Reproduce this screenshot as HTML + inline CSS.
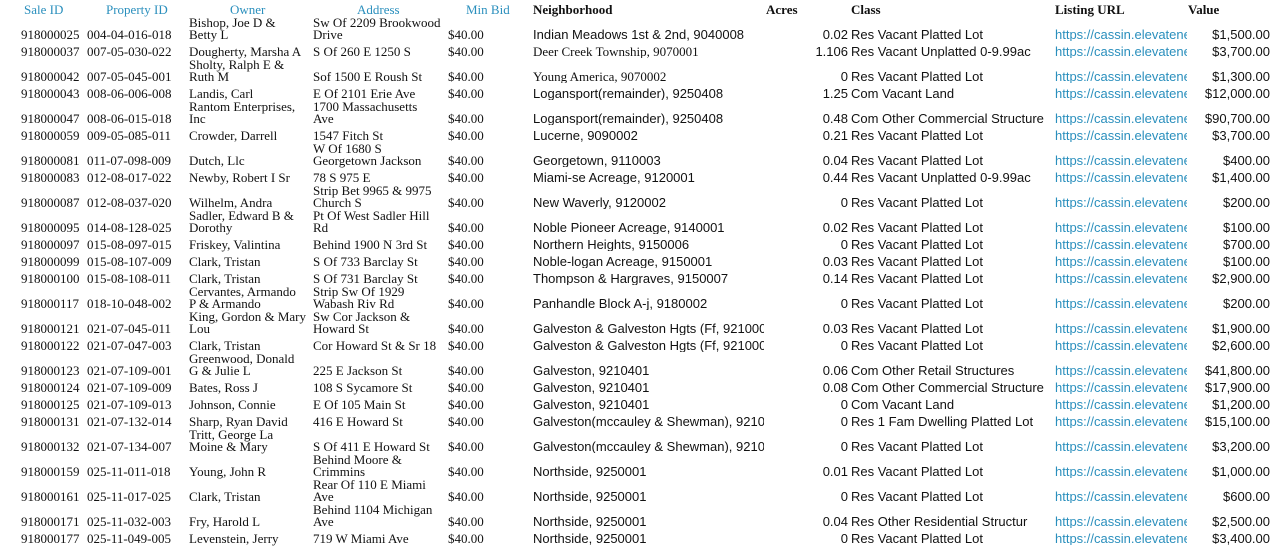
<!DOCTYPE html>
<html><head><meta charset="utf-8"><style>
body{margin:0;background:#fff;width:1277px;height:558px;overflow:hidden;position:relative;color:#111}
.h{position:absolute;top:3px;font-size:13px;line-height:14px}
.hs{font-family:"Liberation Serif",serif;color:#2a8fbd}
.hb{font-family:"Liberation Serif",serif;font-weight:bold;color:#111}
.r{position:absolute;left:0;width:1277px;height:14px}
.r>span{position:absolute;bottom:0px;line-height:12px;font-size:13px;white-space:nowrap}
.s{font-family:"Liberation Serif",serif}
.a{font-family:"Liberation Sans",sans-serif}
.c1{left:21px}.c2{left:87px}.c3{left:189px}.c4{left:313px}.c5{left:448px}
.c6{left:533px;width:231px;overflow:hidden}
.c7{right:429px;text-align:right}
.c8{left:851px}
.c9{left:1055px;width:132px;overflow:hidden;color:#2a8fbd}
.c10{right:7px;text-align:right}
</style></head><body>
<div class="h hs" style="left:24px">Sale ID</div>
<div class="h hs" style="left:106px">Property ID</div>
<div class="h hs" style="left:230px">Owner</div>
<div class="h hs" style="left:357px">Address</div>
<div class="h hs" style="left:466px">Min Bid</div>
<div class="h hb" style="left:533px">Neighborhood</div>
<div class="h hb" style="left:766px">Acres</div>
<div class="h hb" style="left:851px">Class</div>
<div class="h hb" style="left:1055px">Listing URL</div>
<div class="h hb" style="left:1188px">Value</div>

<div class="r" style="top:27px"><span class="s c1">918000025</span><span class="s c2">004-04-016-018</span><span class="s c3">Bishop, Joe D &amp;<br>Betty L</span><span class="s c4">Sw Of 2209 Brookwood<br>Drive</span><span class="s c5">$40.00</span><span class="a c6">Indian Meadows 1st &amp; 2nd, 9040008</span><span class="a c7">0.02</span><span class="a c8">Res Vacant Platted Lot</span><span class="a c9">https://cassin.elevatenetwork</span><span class="a c10">$1,500.00</span></div>
<div class="r" style="top:44px"><span class="s c1">918000037</span><span class="s c2">007-05-030-022</span><span class="s c3">Dougherty, Marsha A</span><span class="s c4">S Of 260 E 1250 S</span><span class="s c5">$40.00</span><span class="s c6">Deer Creek Township, 9070001</span><span class="a c7">1.106</span><span class="a c8">Res Vacant Unplatted 0-9.99ac</span><span class="a c9">https://cassin.elevatenetwork</span><span class="a c10">$3,700.00</span></div>
<div class="r" style="top:69px"><span class="s c1">918000042</span><span class="s c2">007-05-045-001</span><span class="s c3">Sholty, Ralph E &amp;<br>Ruth M</span><span class="s c4">Sof 1500 E Roush St</span><span class="s c5">$40.00</span><span class="s c6">Young America, 9070002</span><span class="a c7">0</span><span class="a c8">Res Vacant Platted Lot</span><span class="a c9">https://cassin.elevatenetwork</span><span class="a c10">$1,300.00</span></div>
<div class="r" style="top:86px"><span class="s c1">918000043</span><span class="s c2">008-06-006-008</span><span class="s c3">Landis, Carl</span><span class="s c4">E Of 2101 Erie Ave</span><span class="s c5">$40.00</span><span class="a c6">Logansport(remainder), 9250408</span><span class="a c7">1.25</span><span class="a c8">Com Vacant Land</span><span class="a c9">https://cassin.elevatenetwork</span><span class="a c10">$12,000.00</span></div>
<div class="r" style="top:111px"><span class="s c1">918000047</span><span class="s c2">008-06-015-018</span><span class="s c3">Rantom Enterprises,<br>Inc</span><span class="s c4">1700 Massachusetts<br>Ave</span><span class="s c5">$40.00</span><span class="a c6">Logansport(remainder), 9250408</span><span class="a c7">0.48</span><span class="a c8">Com Other Commercial Structure</span><span class="a c9">https://cassin.elevatenetwork</span><span class="a c10">$90,700.00</span></div>
<div class="r" style="top:128px"><span class="s c1">918000059</span><span class="s c2">009-05-085-011</span><span class="s c3">Crowder, Darrell</span><span class="s c4">1547 Fitch St</span><span class="s c5">$40.00</span><span class="a c6">Lucerne, 9090002</span><span class="a c7">0.21</span><span class="a c8">Res Vacant Platted Lot</span><span class="a c9">https://cassin.elevatenetwork</span><span class="a c10">$3,700.00</span></div>
<div class="r" style="top:153px"><span class="s c1">918000081</span><span class="s c2">011-07-098-009</span><span class="s c3">Dutch, Llc</span><span class="s c4">W Of 1680 S<br>Georgetown Jackson</span><span class="s c5">$40.00</span><span class="a c6">Georgetown, 9110003</span><span class="a c7">0.04</span><span class="a c8">Res Vacant Platted Lot</span><span class="a c9">https://cassin.elevatenetwork</span><span class="a c10">$400.00</span></div>
<div class="r" style="top:170px"><span class="s c1">918000083</span><span class="s c2">012-08-017-022</span><span class="s c3">Newby, Robert I Sr</span><span class="s c4">78 S 975 E</span><span class="s c5">$40.00</span><span class="a c6">Miami-se Acreage, 9120001</span><span class="a c7">0.44</span><span class="a c8">Res Vacant Unplatted 0-9.99ac</span><span class="a c9">https://cassin.elevatenetwork</span><span class="a c10">$1,400.00</span></div>
<div class="r" style="top:195px"><span class="s c1">918000087</span><span class="s c2">012-08-037-020</span><span class="s c3">Wilhelm, Andra</span><span class="s c4">Strip Bet 9965 &amp; 9975<br>Church S</span><span class="s c5">$40.00</span><span class="a c6">New Waverly, 9120002</span><span class="a c7">0</span><span class="a c8">Res Vacant Platted Lot</span><span class="a c9">https://cassin.elevatenetwork</span><span class="a c10">$200.00</span></div>
<div class="r" style="top:220px"><span class="s c1">918000095</span><span class="s c2">014-08-128-025</span><span class="s c3">Sadler, Edward B &amp;<br>Dorothy</span><span class="s c4">Pt Of West Sadler Hill<br>Rd</span><span class="s c5">$40.00</span><span class="a c6">Noble Pioneer Acreage, 9140001</span><span class="a c7">0.02</span><span class="a c8">Res Vacant Platted Lot</span><span class="a c9">https://cassin.elevatenetwork</span><span class="a c10">$100.00</span></div>
<div class="r" style="top:237px"><span class="s c1">918000097</span><span class="s c2">015-08-097-015</span><span class="s c3">Friskey, Valintina</span><span class="s c4">Behind 1900 N 3rd St</span><span class="s c5">$40.00</span><span class="a c6">Northern Heights, 9150006</span><span class="a c7">0</span><span class="a c8">Res Vacant Platted Lot</span><span class="a c9">https://cassin.elevatenetwork</span><span class="a c10">$700.00</span></div>
<div class="r" style="top:254px"><span class="s c1">918000099</span><span class="s c2">015-08-107-009</span><span class="s c3">Clark, Tristan</span><span class="s c4">S Of 733 Barclay St</span><span class="s c5">$40.00</span><span class="a c6">Noble-logan Acreage, 9150001</span><span class="a c7">0.03</span><span class="a c8">Res Vacant Platted Lot</span><span class="a c9">https://cassin.elevatenetwork</span><span class="a c10">$100.00</span></div>
<div class="r" style="top:271px"><span class="s c1">918000100</span><span class="s c2">015-08-108-011</span><span class="s c3">Clark, Tristan</span><span class="s c4">S Of 731 Barclay St</span><span class="s c5">$40.00</span><span class="a c6">Thompson &amp; Hargraves, 9150007</span><span class="a c7">0.14</span><span class="a c8">Res Vacant Platted Lot</span><span class="a c9">https://cassin.elevatenetwork</span><span class="a c10">$2,900.00</span></div>
<div class="r" style="top:296px"><span class="s c1">918000117</span><span class="s c2">018-10-048-002</span><span class="s c3">Cervantes, Armando<br>P &amp; Armando</span><span class="s c4">Strip Sw Of 1929<br>Wabash Riv Rd</span><span class="s c5">$40.00</span><span class="a c6">Panhandle Block A-j, 9180002</span><span class="a c7">0</span><span class="a c8">Res Vacant Platted Lot</span><span class="a c9">https://cassin.elevatenetwork</span><span class="a c10">$200.00</span></div>
<div class="r" style="top:321px"><span class="s c1">918000121</span><span class="s c2">021-07-045-011</span><span class="s c3">King, Gordon &amp; Mary<br>Lou</span><span class="s c4">Sw Cor Jackson &amp;<br>Howard St</span><span class="s c5">$40.00</span><span class="a c6">Galveston &amp; Galveston Hgts (Ff, 9210001</span><span class="a c7">0.03</span><span class="a c8">Res Vacant Platted Lot</span><span class="a c9">https://cassin.elevatenetwork</span><span class="a c10">$1,900.00</span></div>
<div class="r" style="top:338px"><span class="s c1">918000122</span><span class="s c2">021-07-047-003</span><span class="s c3">Clark, Tristan</span><span class="s c4">Cor Howard St &amp; Sr 18</span><span class="s c5">$40.00</span><span class="a c6">Galveston &amp; Galveston Hgts (Ff, 9210001</span><span class="a c7">0</span><span class="a c8">Res Vacant Platted Lot</span><span class="a c9">https://cassin.elevatenetwork</span><span class="a c10">$2,600.00</span></div>
<div class="r" style="top:363px"><span class="s c1">918000123</span><span class="s c2">021-07-109-001</span><span class="s c3">Greenwood, Donald<br>G &amp; Julie L</span><span class="s c4">225 E Jackson St</span><span class="s c5">$40.00</span><span class="a c6">Galveston, 9210401</span><span class="a c7">0.06</span><span class="a c8">Com Other Retail Structures</span><span class="a c9">https://cassin.elevatenetwork</span><span class="a c10">$41,800.00</span></div>
<div class="r" style="top:380px"><span class="s c1">918000124</span><span class="s c2">021-07-109-009</span><span class="s c3">Bates, Ross J</span><span class="s c4">108 S Sycamore St</span><span class="s c5">$40.00</span><span class="a c6">Galveston, 9210401</span><span class="a c7">0.08</span><span class="a c8">Com Other Commercial Structure</span><span class="a c9">https://cassin.elevatenetwork</span><span class="a c10">$17,900.00</span></div>
<div class="r" style="top:397px"><span class="s c1">918000125</span><span class="s c2">021-07-109-013</span><span class="s c3">Johnson, Connie</span><span class="s c4">E Of 105 Main St</span><span class="s c5">$40.00</span><span class="a c6">Galveston, 9210401</span><span class="a c7">0</span><span class="a c8">Com Vacant Land</span><span class="a c9">https://cassin.elevatenetwork</span><span class="a c10">$1,200.00</span></div>
<div class="r" style="top:414px"><span class="s c1">918000131</span><span class="s c2">021-07-132-014</span><span class="s c3">Sharp, Ryan David</span><span class="s c4">416 E Howard St</span><span class="s c5">$40.00</span><span class="a c6">Galveston(mccauley &amp; Shewman), 9210402</span><span class="a c7">0</span><span class="a c8">Res 1 Fam Dwelling Platted Lot</span><span class="a c9">https://cassin.elevatenetwork</span><span class="a c10">$15,100.00</span></div>
<div class="r" style="top:439px"><span class="s c1">918000132</span><span class="s c2">021-07-134-007</span><span class="s c3">Tritt, George La<br>Moine &amp; Mary</span><span class="s c4">S Of 411 E Howard St</span><span class="s c5">$40.00</span><span class="a c6">Galveston(mccauley &amp; Shewman), 9210402</span><span class="a c7">0</span><span class="a c8">Res Vacant Platted Lot</span><span class="a c9">https://cassin.elevatenetwork</span><span class="a c10">$3,200.00</span></div>
<div class="r" style="top:464px"><span class="s c1">918000159</span><span class="s c2">025-11-011-018</span><span class="s c3">Young, John R</span><span class="s c4">Behind Moore &amp;<br>Crimmins</span><span class="s c5">$40.00</span><span class="a c6">Northside, 9250001</span><span class="a c7">0.01</span><span class="a c8">Res Vacant Platted Lot</span><span class="a c9">https://cassin.elevatenetwork</span><span class="a c10">$1,000.00</span></div>
<div class="r" style="top:489px"><span class="s c1">918000161</span><span class="s c2">025-11-017-025</span><span class="s c3">Clark, Tristan</span><span class="s c4">Rear Of 110 E Miami<br>Ave</span><span class="s c5">$40.00</span><span class="a c6">Northside, 9250001</span><span class="a c7">0</span><span class="a c8">Res Vacant Platted Lot</span><span class="a c9">https://cassin.elevatenetwork</span><span class="a c10">$600.00</span></div>
<div class="r" style="top:514px"><span class="s c1">918000171</span><span class="s c2">025-11-032-003</span><span class="s c3">Fry, Harold L</span><span class="s c4">Behind 1104 Michigan<br>Ave</span><span class="s c5">$40.00</span><span class="a c6">Northside, 9250001</span><span class="a c7">0.04</span><span class="a c8">Res Other Residential Structur</span><span class="a c9">https://cassin.elevatenetwork</span><span class="a c10">$2,500.00</span></div>
<div class="r" style="top:531px"><span class="s c1">918000177</span><span class="s c2">025-11-049-005</span><span class="s c3">Levenstein, Jerry</span><span class="s c4">719 W Miami Ave</span><span class="s c5">$40.00</span><span class="a c6">Northside, 9250001</span><span class="a c7">0</span><span class="a c8">Res Vacant Platted Lot</span><span class="a c9">https://cassin.elevatenetwork</span><span class="a c10">$3,400.00</span></div>
</body></html>
